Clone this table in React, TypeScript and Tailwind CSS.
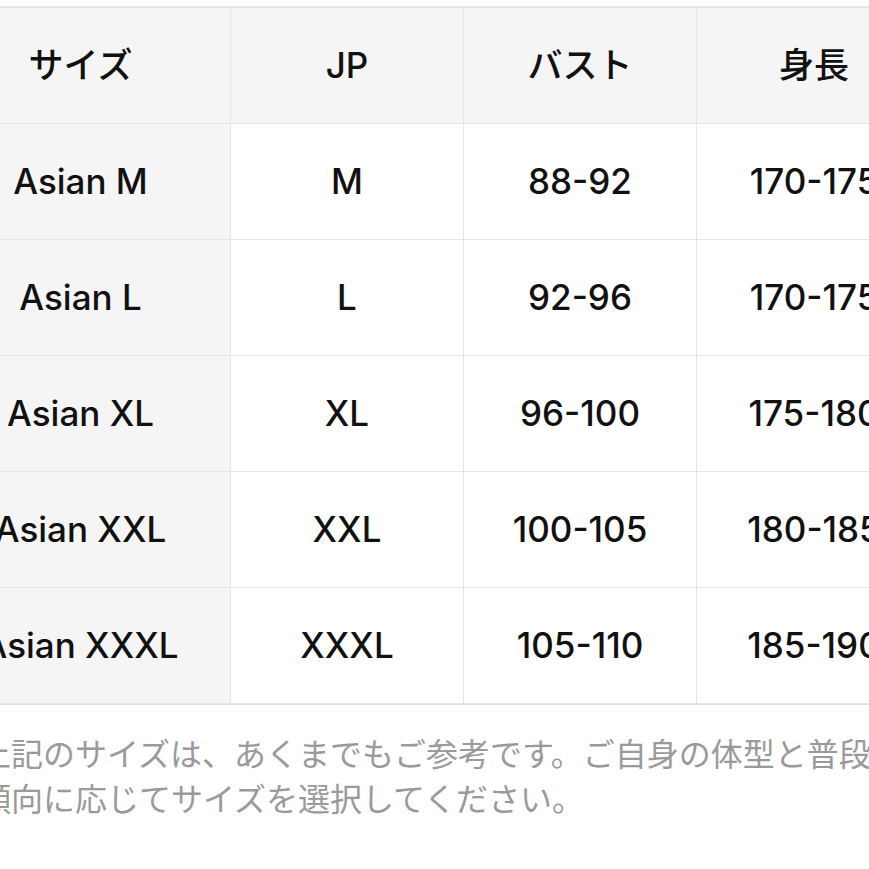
import React from "react";

const rows = [
  { size: "Asian M", jp: "M", bust: "88-92", height: "170-175" },
  { size: "Asian L", jp: "L", bust: "92-96", height: "170-175" },
  { size: "Asian XL", jp: "XL", bust: "96-100", height: "175-180" },
  { size: "Asian XXL", jp: "XXL", bust: "100-105", height: "180-185" },
  { size: "Asian XXXL", jp: "XXXL", bust: "105-110", height: "185-190" },
];

const font = { fontFamily: '"Inter", "Noto Sans CJK JP", sans-serif' };

function Cell({ children, shaded, last }: { children: React.ReactNode; shaded?: boolean; last?: boolean }) {
  return (
    <div
      className={`flex h-[116px] items-center justify-center whitespace-nowrap border-b border-[#e6e6e6] text-[35px] font-medium text-[#111] ${
        last ? "" : "border-r"
      } ${shaded ? "bg-[#f5f5f5]" : "bg-white"}`}
    >
      {children}
    </div>
  );
}

export default function App() {
  return (
    <div className="h-[869px] w-[869px] overflow-hidden bg-white" style={font}>
      <div className="ml-[-69px] w-[1000px] pt-[6px]">
        {/* Size table */}
        <div className="grid grid-cols-[300px_233px_233px_234px] border-t-2 border-[#e6e6e6]">
          <Cell shaded>サイズ</Cell>
          <Cell shaded>JP</Cell>
          <Cell shaded>バスト</Cell>
          <Cell shaded last>身長</Cell>
          {rows.map((r, i) => (
            <React.Fragment key={i}>
              <Cell shaded>{r.size}</Cell>
              <Cell>{r.jp}</Cell>
              <Cell>{r.bust}</Cell>
              <Cell last>{r.height}</Cell>
            </React.Fragment>
          ))}
        </div>
        <div className="h-px bg-[#e0e0e0]" />

        {/* Note */}
        <div className="mt-[27px] pl-[48px] text-[32px] leading-[45px] text-[#9a9a9a]">
          <p className="whitespace-nowrap">上記のサイズは、あくまでもご参考です。ご自身の体型と普段の</p>
          <p className="whitespace-nowrap">傾向に応じてサイズを選択してください。</p>
        </div>
      </div>
    </div>
  );
}
